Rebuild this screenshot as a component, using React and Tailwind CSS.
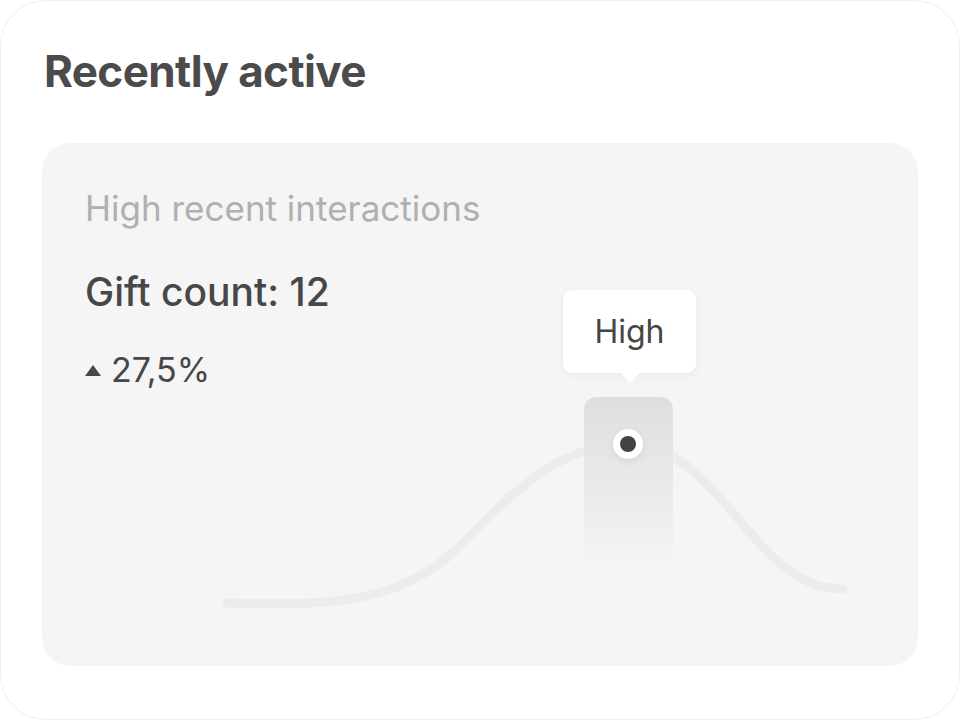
import React from "react";

const curve =
  "M227,602 C347,606 410,598.6 470,535 C520,482 568,443 628,443 C673,443 705,478 740,520 C775,562 803,588 843,588";

export default function App() {
  return (
    <div className="w-[960px] h-[720px] bg-white" style={{ fontFamily: "Inter, 'Noto Sans', sans-serif" }}>
      <div className="w-full h-full rounded-[46px] border border-[#efefef] bg-white flex flex-col px-[41px] pb-[53px]">
        <h1 className="text-[44px] leading-none font-bold text-[#4b4b4b] tracking-[-0.6px] mt-[48px] ml-[2px]">
          Recently active
        </h1>
        <div className="relative mt-[50px] flex-1 rounded-[28px] bg-[#f5f5f5] overflow-hidden">
          <svg
            className="absolute inset-0"
            width="876"
            height="524"
            viewBox="0 0 876 524"
          >
            <defs>
              <linearGradient id="barg" x1="0" y1="0" x2="0" y2="1">
                <stop offset="0" stopColor="#dedede" />
                <stop offset="0.35" stopColor="#e6e6e6" />
                <stop offset="1" stopColor="#f5f5f5" />
              </linearGradient>
              <filter id="dsh" x="-50%" y="-50%" width="200%" height="200%">
                <feDropShadow dx="0" dy="2" stdDeviation="3" floodColor="#000" floodOpacity="0.08" />
              </filter>
            </defs>
            <g transform="translate(-42,-142)">
              <path d={curve} fill="none" stroke="#ececec" strokeWidth="9" strokeLinecap="round" />
              <path
                d="M584,572 L584,410 Q584,396 598,396 L659,396 Q673,396 673,410 L673,572 Z"
                fill="url(#barg)"
              />
              <circle cx="628" cy="443" r="15" fill="#ffffff" filter="url(#dsh)" />
              <circle cx="628" cy="443" r="8" fill="#444444" />
            </g>
          </svg>

          <div className="relative flex flex-col pl-[43px] pt-[48px]">
            <div className="text-[35px] leading-none text-[#b0b0b0]">High recent interactions</div>
            <div className="mt-[46px] text-[39px] leading-none font-medium text-[#474747]">Gift count: 12</div>
            <div className="mt-[42px] flex items-center gap-[10px] text-[34px] leading-none text-[#474747]">
              <svg width="16" height="11" viewBox="0 0 16 11">
                <path d="M8,0 L16,11 L0,11 Z" fill="#474747" />
              </svg>
              <span>27,5%</span>
            </div>
          </div>

          <div className="absolute left-[521px] top-[147px] flex flex-col items-center">
            <div className="w-[133px] h-[83px] rounded-[9px] bg-white flex items-center justify-center text-[32px] text-[#454545] shadow-[0_2px_8px_rgba(0,0,0,0.05)]">
              High
            </div>
            <div className="w-0 h-0 border-l-[9px] border-r-[9px] border-t-[10px] border-l-transparent border-r-transparent border-t-white" />
          </div>
        </div>
      </div>
    </div>
  );
}
